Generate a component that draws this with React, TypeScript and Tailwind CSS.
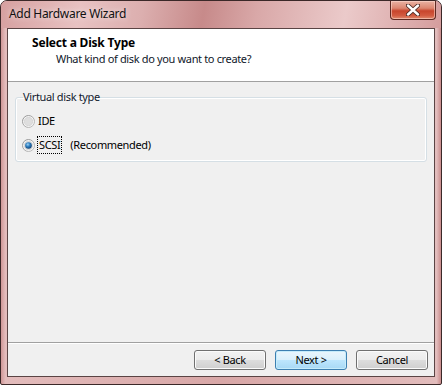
import type { ReactNode } from 'react'

const font = { fontFamily: '"Segoe UI", "Noto Sans", sans-serif' }

function CloseButton() {
  return (
    <div className="mr-[5px] flex h-[19px] w-[46px] items-center justify-center rounded-b-[4px] border border-t-0 border-[#5e2a22] bg-[linear-gradient(180deg,#eab3a4_0%,#dc8670_40%,#c8452c_55%,#d25a3f_80%,#e08a6e_100%)] shadow-[inset_0_0_0_1px_rgba(255,220,210,0.55)]">
      <svg width="14" height="12" viewBox="0 0 14 12">
        <path d="M2 1.5 L12 10.5 M12 1.5 L2 10.5" stroke="#4a2a24" strokeWidth="4.2" strokeLinecap="round" />
        <path d="M2 1.5 L12 10.5 M12 1.5 L2 10.5" stroke="#ffffff" strokeWidth="2.4" strokeLinecap="round" />
      </svg>
    </div>
  )
}

function Radio({ checked }: { checked?: boolean }) {
  return (
    <svg width="13" height="13" viewBox="0 0 13 13" className="shrink-0">
      <defs>
        <linearGradient id={checked ? 'rimOn' : 'rimOff'} x1="0" y1="0" x2="1" y2="1">
          <stop offset="0" stopColor="#8e8e8e" />
          <stop offset="1" stopColor="#c4c4c4" />
        </linearGradient>
        <radialGradient id="dot" cx="0.4" cy="0.35" r="0.7">
          <stop offset="0" stopColor="#9fd3f5" />
          <stop offset="0.45" stopColor="#2f7fc0" />
          <stop offset="1" stopColor="#0f3d6e" />
        </radialGradient>
      </defs>
      <circle cx="6.5" cy="6.5" r="6" fill="#f4f4f4" stroke={`url(#${checked ? 'rimOn' : 'rimOff'})`} />
      <circle cx="6.5" cy="6.5" r="4.2" fill="#dedede" stroke="#cccccc" strokeWidth="0.6" />
      {checked && <circle cx="6.5" cy="6.5" r="3.3" fill="url(#dot)" />}
    </svg>
  )
}

function WinButton({ children, primary }: { children: ReactNode; primary?: boolean }) {
  return (
    <button
      className={
        primary
          ? 'flex h-[20px] w-[72px] items-center justify-center rounded-[3px] border border-[#3c7fb1] bg-[linear-gradient(180deg,#eaf6fd_0%,#d9f0fc_50%,#bee6fd_50%,#a7d9f5_100%)] text-black shadow-[inset_0_0_0_1px_#c6ecfb]'
          : 'flex h-[20px] w-[72px] items-center justify-center rounded-[3px] border border-[#707070] bg-[linear-gradient(180deg,#f2f2f2_0%,#ebebeb_50%,#dddddd_50%,#cfcfcf_100%)] text-black shadow-[inset_0_0_0_1px_#fbfbfb]'
      }
    >
      {children}
    </button>
  )
}

export default function App() {
  return (
    <div
      className="flex h-[385px] w-[442px] flex-col rounded-t-[7px] rounded-b-[2px] border border-[#3b2828] bg-[linear-gradient(90deg,#cf9797_0%,#e3bcbc_1%,#d8a7a7_50%,#e2bcbc_99%,#c98c8c_100%)] text-[11px] leading-[16px] tracking-[-0.35px] text-black"
      style={font}
    >
      <div className="flex h-[27px] shrink-0 items-start justify-between rounded-t-[6px] bg-[linear-gradient(100deg,#d6a0a0_0%,#e8c2c2_18%,#dcafaf_32%,#c78a8a_46%,#d9a8a8_58%,#ebcaca_78%,#d59d9d_100%)]">
        <span className="mt-[5px] pl-[8px] text-[12px] tracking-[-0.3px] text-[#111] [text-shadow:0_0_6px_rgba(255,255,255,0.8)]">
          Add Hardware Wizard
        </span>
        <CloseButton />
      </div>

      <div className="mx-[6px] mb-[7px] flex flex-1 flex-col border border-[#5a4444] bg-[#f0f0f0]">
        <div className="h-[53px] shrink-0 border-b border-[#a0a0a0] bg-white pt-[6px]">
          <div className="pl-[24px] text-[12px] font-bold tracking-[-0.2px]">Select a Disk Type</div>
          <div className="pl-[48px] text-[#10182a]">What kind of disk do you want to create?</div>
        </div>

        <div className="flex-1 pl-[7px] pr-[7px] pt-[7px]">
          <fieldset className="rounded-[3px] border border-[#d5dfe5] pb-[4px] shadow-[inset_0_0_0_1px_#ffffff]">
            <legend className="ml-[7px] px-0 text-[#111a2e]">Virtual disk type</legend>
            <div className="pl-[6px] pt-[4px]">
              <div className="flex h-[24px] items-center">
                <Radio />
                <span className="ml-[3px]">IDE</span>
              </div>
              <div className="flex h-[24px] items-center">
                <Radio checked />
                <span className="ml-[3px] px-[1px] outline outline-1 outline-dotted outline-black">SCSI</span>
                <span className="ml-[9px]">(Recommended)</span>
              </div>
            </div>
          </fieldset>
        </div>

        <div className="flex h-[34px] shrink-0 justify-end gap-[9px] border-t border-[#a0a0a0] pr-[6px] pt-[7px] shadow-[inset_0_1px_0_#ffffff]">
          <WinButton>&lt; Back</WinButton>
          <WinButton primary>Next &gt;</WinButton>
          <WinButton>Cancel</WinButton>
        </div>
      </div>
    </div>
  )
}
